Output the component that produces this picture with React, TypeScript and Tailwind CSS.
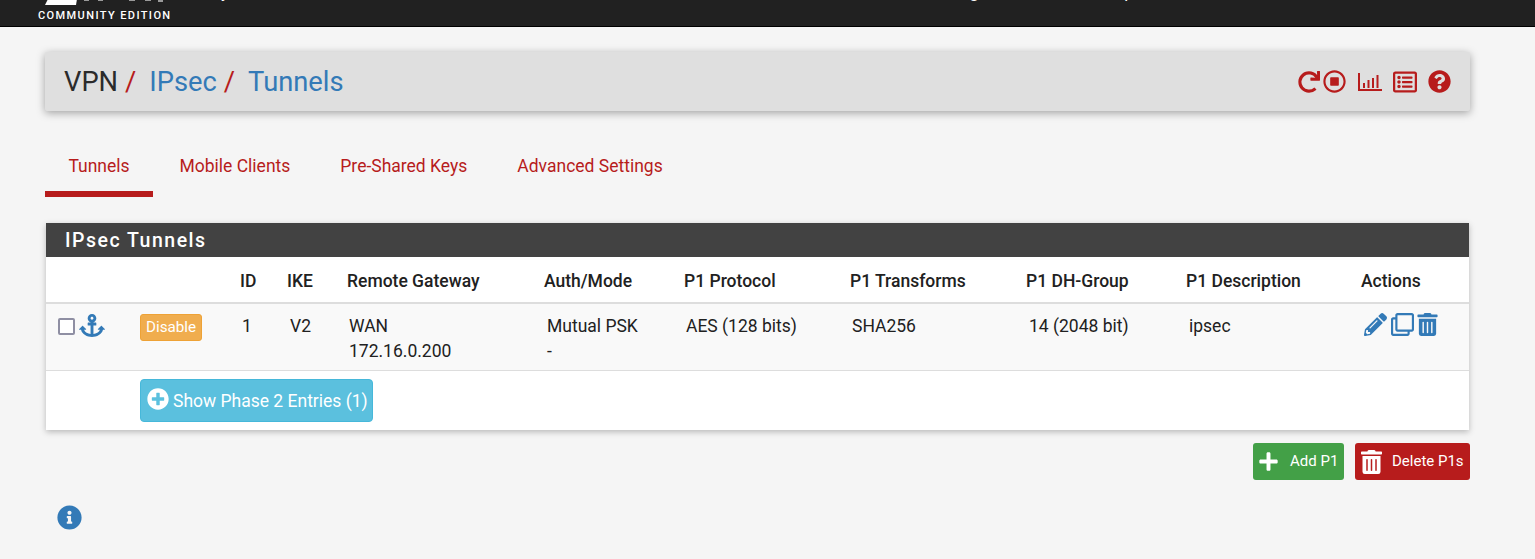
import React from 'react';
import {
  FaAnchor,
  FaInfoCircle,
  FaPencilAlt,
  FaPlus,
  FaPlusCircle,
  FaQuestionCircle,
  FaRedo,
  FaRegClone,
  FaRegListAlt,
  FaRegStopCircle,
  FaTrashAlt,
} from 'react-icons/fa';

const columns = [
  { label: '', width: 'w-[94px]' },
  { label: '', width: 'w-[100px]' },
  { label: 'ID', width: 'w-[47px]' },
  { label: 'IKE', width: 'w-[60px]' },
  { label: 'Remote Gateway', width: 'w-[197px]' },
  { label: 'Auth/Mode', width: 'w-[140px]' },
  { label: 'P1 Protocol', width: 'w-[166px]' },
  { label: 'P1 Transforms', width: 'w-[176px]' },
  { label: 'P1 DH-Group', width: 'w-[160px]' },
  { label: 'P1 Description', width: 'w-[175px]' },
  { label: 'Actions', width: 'flex-1' },
];

const tabs = ['Mobile Clients', 'Pre-Shared Keys', 'Advanced Settings'];

const BarChartIcon = () => (
  <svg viewBox="0 0 24 18" className="h-[18px] w-[24px]" fill="currentColor">
    <path d="M0 0h2v16h22v2H0z" />
    <rect x="5" y="10" width="2" height="5" />
    <rect x="9.5" y="7" width="2" height="8" />
    <rect x="14" y="5" width="2" height="10" />
    <rect x="18.5" y="2" width="2" height="13" />
  </svg>
);

// only the bottom edge of the logo shows, the page is scrolled
const LogoEdge = () => (
  <svg viewBox="0 0 125 6" className="-mb-[4px] ml-[7px] h-[6px] w-[125px] shrink-0">
    <path d="M3 0h29l-1 6H0z" fill="#ffffff" />
    <g fill="#9a9a9a">
      <rect x="39" y="0" width="5" height="2" />
      <rect x="53" y="0" width="5" height="2" />
      <rect x="84" y="0" width="6" height="2" />
      <rect x="100" y="0" width="6" height="2" />
      <rect x="113" y="0" width="5" height="3" />
    </g>
  </svg>
);

export default function App() {
  return (
    <div className="min-h-[559px] overflow-hidden bg-[#f5f5f5] font-['Roboto',sans-serif] text-[#212121]">
      <header className="flex h-[27px] flex-col justify-end overflow-hidden border-b border-black bg-[#212121] pl-[38px]">
        <div className="mb-[8px] flex h-[18px] shrink-0 items-end text-[17px] leading-[18px] text-white">
          <LogoEdge />
          <span className="ml-[41px] w-[734px] shrink-0">System</span>
          <span className="w-[154px] shrink-0">Diagnostics</span>
          <span className="shrink-0">Help</span>
        </div>
        <span className="mb-[3px] h-[14px] shrink-0 text-[11px] font-medium leading-[14px] tracking-[1.4px] text-white">COMMUNITY EDITION</span>
      </header>

      <div className="px-[45px] pt-[25px] pr-[65px]">
        <div className="flex h-[59px] items-center justify-between rounded-[2px] bg-[#dfdfdf] px-[19px] shadow-[0_2px_8px_rgba(0,0,0,0.35)]">
          <h1 className="flex pt-[2px] text-[27.3px] font-normal text-[#2b2b2b]">
            <span>VPN</span>
            <span className="ml-[7px] text-[#b71c1c]">/</span>
            <span className="ml-[13px] text-[#337ab7]">IPsec</span>
            <span className="ml-[7px] text-[#b71c1c]">/</span>
            <span className="ml-[13px] text-[#337ab7]">Tunnels</span>
          </h1>
          <div className="flex items-center text-[#b71c1c]">
            <FaRedo className="h-[22px] w-[22px]" />
            <FaRegStopCircle className="ml-[3px] h-[23px] w-[23px]" />
            <span className="ml-[12px]"><BarChartIcon /></span>
            <FaRegListAlt className="ml-[11px] h-[24px] w-[24px]" />
            <FaQuestionCircle className="ml-[11px] h-[23px] w-[23px]" />
          </div>
        </div>

        <nav className="mt-[30px] flex h-[56px] text-[17.5px]">
          <a className="flex w-[108px] items-center justify-center border-b-[6px] border-[#b71c1c] text-[#b71c1c]">Tunnels</a>
          <div className="ml-[1.5px] flex">
            {tabs.map((tab) => (
              <a key={tab} className="flex items-center px-[25px] pb-[6px] text-[#b71c1c]">
                {tab}
              </a>
            ))}
          </div>
        </nav>

        <section className="mx-[1px] mt-[26px] bg-white shadow-[0_2px_6px_rgba(0,0,0,0.25)]">
          <h2 className="flex h-[34px] items-center bg-[#424242] pt-[1px] pl-[19px] text-[19.5px] font-medium tracking-[1.5px] text-white">IPsec Tunnels</h2>

          <div className="flex h-[47px] items-center border-b-2 border-[#dddddd] pt-[3px] text-[17.5px] font-medium">
            {columns.map((col, i) => (
              <div key={i} className={col.width}>{col.label}</div>
            ))}
          </div>

          <div className="flex h-[67px] border-b border-[#dddddd] bg-[#f9f9f9] pt-[10px] text-[17.5px] leading-[25px]">
            <div className="flex w-[94px] items-start pl-[12px]">
              <span className="mt-[4px] h-[17px] w-[17px] rounded-[2px] border-2 border-[#8f8fa3] bg-white" />
              <FaAnchor className="ml-[4px] -mt-[1px] h-[25px] w-[26px] text-[#337ab7]" />
            </div>
            <div className="w-[100px]">
              <span className="flex h-[27px] w-[62px] items-center justify-center rounded-[3px] border border-[#eea236] bg-[#f0ad4e] text-[15.2px] text-white">Disable</span>
            </div>
            <div className="w-[47px] pl-[2px]">1</div>
            <div className="w-[60px] pl-[3px]">V2</div>
            <div className="w-[197px] pl-[2px]">WAN<br />172.16.0.200</div>
            <div className="w-[140px] pl-[3px]">Mutual PSK<br />-</div>
            <div className="w-[166px] pl-[2px]">AES (128 bits)</div>
            <div className="w-[176px] pl-[2px]">SHA256</div>
            <div className="w-[160px] pl-[3px]">14 (2048 bit)</div>
            <div className="w-[175px] pl-[3px]">ipsec</div>
            <div className="-mt-[1px] flex flex-1 items-start text-[#337ab7]">
              <FaPencilAlt className="ml-[3px] h-[23px] w-[23px]" />
              <FaRegClone className="ml-[4px] h-[23px] w-[23px]" />
              <FaTrashAlt className="ml-[3px] h-[23px] w-[21px]" />
            </div>
          </div>

          <div className="h-[59px] pt-[8px] pl-[94px]">
            <button className="flex h-[43px] w-[233px] items-center rounded-[4px] border border-[#46b8da] bg-[#5bc0de] pl-[6px] pt-[1px] text-[17.5px] text-white">
              <FaPlusCircle className="mb-[4px] mr-[4px] h-[22px] w-[22px]" />
              Show Phase 2 Entries (1)
            </button>
          </div>
        </section>

        <div className="mt-[13px] flex justify-end gap-[11px] text-[15px] text-white">
          <button className="flex h-[37px] w-[91px] items-center rounded-[3px] bg-[#43a047] pl-[5px]">
            <FaPlus className="h-[21px] w-[21px]" />
            <span className="ml-[11px]">Add P1</span>
          </button>
          <button className="flex h-[37px] w-[115px] items-center rounded-[3px] bg-[#b71c1c] pl-[6px]">
            <FaTrashAlt className="h-[24px] w-[21px]" />
            <span className="ml-[10px]">Delete P1s</span>
          </button>
        </div>

        <FaInfoCircle className="mt-[25px] ml-[12px] h-[25px] w-[25px] text-[#337ab7]" />
      </div>
    </div>
  );
}
